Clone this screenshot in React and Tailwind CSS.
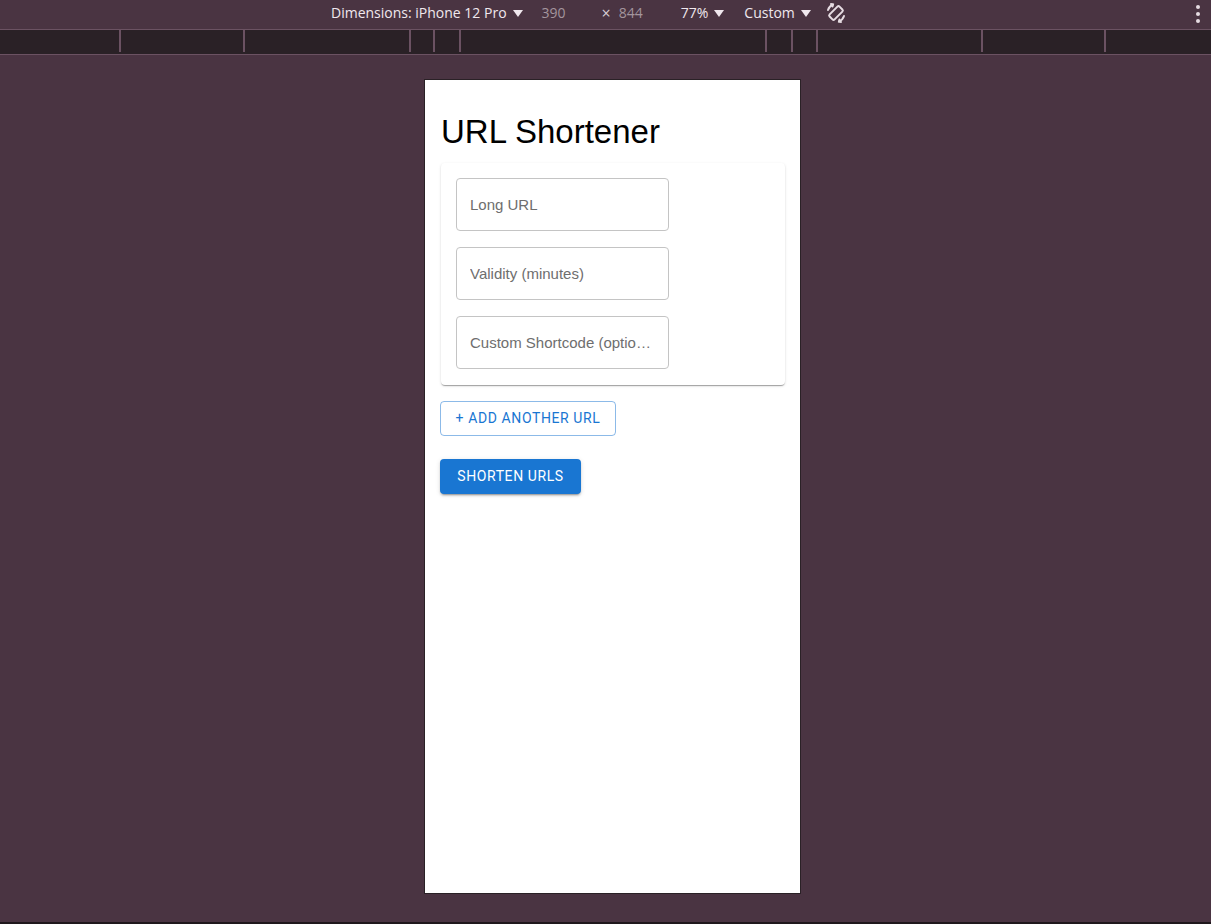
import React from 'react'

const Caret = () => (
  <svg width="10" height="7" viewBox="0 0 10 7" className="ml-[6px] mt-[2px]">
    <path d="M0 0 L10 0 L5 7 Z" fill="#f0e8ee" />
  </svg>
)

const RotateIcon = () => (
  <svg width="24" height="24" viewBox="0 0 24 24" fill="none" stroke="#e6dce2" strokeWidth="2" strokeLinecap="round">
    <rect x="8.5" y="5" width="7" height="14" rx="1.5" transform="rotate(45 12 12)" />
    <path d="M4 9 A9 9 0 0 1 9 3.5" />
    <path d="M7 3 L9 3.5 L8.5 5.5" />
    <path d="M20 15 A9 9 0 0 1 15 20.5" />
    <path d="M17 21 L15 20.5 L15.5 18.5" />
  </svg>
)

const rulerStops = [121, 124, 166, 24, 26, 306, 26, 25, 165, 123]

const Field = ({ label }) => (
  <div className="w-[213px] h-[53px] border border-[#c4c4c4] rounded-[4px] flex items-center px-[13px] pt-[1px]">
    <span className="truncate text-[15px] text-[#6e6e6e]">{label}</span>
  </div>
)

export default function App() {
  return (
    <div className="w-[1211px] h-[924px] bg-[#4a3442] flex flex-col overflow-hidden" style={{ fontFamily: '"Liberation Sans", Arial, sans-serif' }}>
      {/* devtools device toolbar */}
      <div className="h-[29px] pb-[4px] flex items-center text-[14px] text-[#f0e8ee] relative" style={{ fontFamily: '"Open Sans", "Noto Sans", sans-serif' }}>
        <div className="flex items-center pl-[331px]">
          <span>Dimensions: iPhone 12 Pro</span>
          <Caret />
        </div>
        <span className="ml-[19px] text-[#a3959d]">390</span>
        <span className="ml-[36px] text-[#d8ccd3] text-[16px]">×</span>
        <span className="ml-[8px] text-[#a3959d]">844</span>
        <div className="flex items-center ml-[38px]">
          <span>77%</span>
          <Caret />
        </div>
        <div className="flex items-center ml-[20px]">
          <span>Custom</span>
          <Caret />
        </div>
        <div className="ml-[13px] flex items-center">
          <RotateIcon />
        </div>
        <div className="absolute right-[11px] top-[5px] flex flex-col gap-[3px]">
          <div className="w-[4px] h-[4px] rounded-full bg-[#e6dce2]" />
          <div className="w-[4px] h-[4px] rounded-full bg-[#e6dce2]" />
          <div className="w-[4px] h-[4px] rounded-full bg-[#e6dce2]" />
        </div>
      </div>
      <div className="h-[1px] bg-[#6b5262]" />
      {/* ruler */}
      <div className="h-[24px] bg-[#2a2126] flex">
        {rulerStops.map((w, i) => (
          <div key={i} className="h-[22px] border-r-2 border-[#6b5262] shrink-0" style={{ width: w }} />
        ))}
      </div>
      <div className="h-[1px] bg-[#6b5262]" />

      {/* viewport */}
      <div className="flex-1 flex flex-col">
        <div className="ml-[425px] mt-[25px] w-[375px] h-[813px] bg-white px-[16px] pt-[31px] outline outline-1 outline-[#2a2126]">
          <h1 className="text-[33px] leading-[41px] text-black font-normal">URL Shortener</h1>
          <div className="mt-[11px] w-[344px] rounded-[4px] bg-white px-[15px] pt-[15px] pb-[16px] flex flex-col gap-[16px] shadow-[0_2px_1px_-1px_rgba(0,0,0,0.2),0_1px_1px_0_rgba(0,0,0,0.14),0_1px_3px_0_rgba(0,0,0,0.12)]">
            <Field label="Long URL" />
            <Field label="Validity (minutes)" />
            <Field label="Custom Shortcode (optional)" />
          </div>
          <div className="flex flex-col items-start -ml-[1px]" style={{ fontFamily: 'Roboto, sans-serif' }}>
            <button className="mt-[16px] h-[35px] w-[176px] border border-[rgba(25,118,210,0.5)] rounded-[4px] text-[#1976d2] text-[14px] font-normal tracking-[0.6px] uppercase">
              + Add Another URL
            </button>
            <button className="mt-[23px] h-[35px] w-[141px] bg-[#1976d2] rounded-[4px] text-white text-[14px] font-normal tracking-[0.6px] uppercase shadow-[0_3px_1px_-2px_rgba(0,0,0,0.2),0_2px_2px_0_rgba(0,0,0,0.14),0_1px_5px_0_rgba(0,0,0,0.12)]">
              Shorten URLs
            </button>
          </div>
        </div>
      </div>
      <div className="h-[2px] bg-[#1f181c]" />
    </div>
  )
}
